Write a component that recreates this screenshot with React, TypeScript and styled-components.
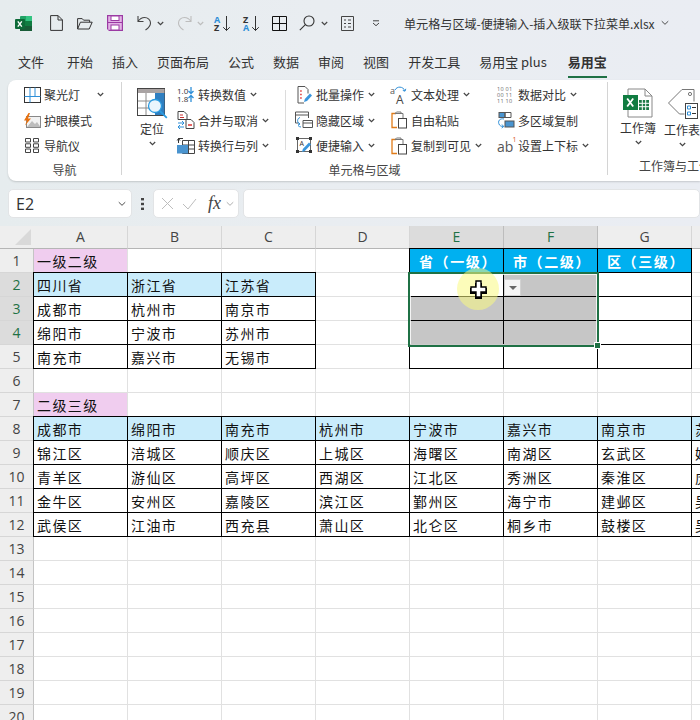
import React from 'react';
import styled, { createGlobalStyle } from 'styled-components';

const CJK = '"Noto Sans CJK SC", "Noto Sans", sans-serif';
const GREEN = '#1f7145';

const GlobalStyle = createGlobalStyle`
  html, body { margin: 0; padding: 0; background: #fff; }
  body { font-family: ${CJK}; color: #262626; }
  svg { overflow: visible; }
`;

const Page = styled.div`
  width: 700px;
  height: 720px;
  overflow: hidden;
  background: linear-gradient(90deg, #e6ecee 0%, #e9edf1 45%, #eaedf3 100%);
`;

/* title bar */
const TitleBar = styled.div`
  height: 46px;
  display: flex;
  align-items: center;
  white-space: nowrap;
`;

const Quick = styled.div<{ $left: number; $w: number }>`
  margin-left: ${({ $left }) => $left}px;
  width: ${({ $w }) => $w}px;
  display: flex;
  justify-content: center;
  flex: none;
`;

const Title = styled.span`
  margin-left: 24px;
  font-size: 12.1px;
  color: #333;
  flex: none;
`;

const Tabs = styled.div`
  height: 32px;
  padding-left: 18px;
  display: flex;
  gap: 19px;
  white-space: nowrap;
`;

const Tab = styled.div<{ $active?: boolean; $extra?: number }>`
  height: 30px;
  line-height: 32px;
  font-size: 13px;
  color: #333;
  font-weight: ${({ $active }) => ($active ? 700 : 400)};
  margin-right: ${({ $extra }) => $extra || 0}px;
  border-bottom: 2px solid ${({ $active }) => ($active ? GREEN : 'transparent')};
`;

/* ribbon */
const Ribbon = styled.div`
  margin: 2px 0 0 8px;
  height: 101px;
  display: flex;
  overflow: hidden;
  background: #fff;
  border-radius: 8px 0 0 8px;
  box-shadow: 0 1px 2px rgba(0, 0, 0, 0.16);
`;

const Group = styled.div<{ $w: number }>`
  flex: none;
  width: ${({ $w }) => $w}px;
  margin-top: 2px;
  height: 93px;
  border-right: 1px solid #d4d4d4;
  display: flex;
  flex-direction: column;
`;

const GroupBody = styled.div<{ $pad: number }>`
  height: 77px;
  padding-left: ${({ $pad }) => $pad}px;
  display: flex;
`;

const GroupLabel = styled.div`
  font-size: 12px;
  line-height: 18px;
  margin-top: 2px;
  text-align: center;
  color: #444;
  white-space: nowrap;
`;

const ItemColumn = styled.div<{ $w?: number }>`
  flex: none;
  width: ${({ $w }) => ($w ? `${$w}px` : 'auto')};
  display: grid;
  grid-auto-rows: 25.5px;
`;

const Item = styled.div`
  display: flex;
  align-items: center;
  font-size: 12px;
  color: #333;
  white-space: nowrap;
`;

const ItemIcon = styled.span`
  width: 18px;
  height: 18px;
  margin-right: 3px;
  display: flex;
  align-items: center;
  justify-content: center;
  flex: none;
`;

const BigButton = styled.div<{ $w: number }>`
  flex: none;
  width: ${({ $w }) => $w}px;
  padding-top: 6px;
  display: flex;
  flex-direction: column;
  align-items: center;
  font-size: 12px;
  line-height: 16px;
  color: #333;
  white-space: nowrap;
`;

const BigLabel = styled.span`
  margin: 2px 0 4px;
`;

const InnerDivider = styled.div<{ $left: number; $right: number }>`
  flex: none;
  width: 1px;
  height: 60px;
  margin: 8px ${({ $right }) => $right}px 0 ${({ $left }) => $left}px;
  background: #dcdcdc;
`;

const ChevronSvg = styled.svg<{ $gap?: number }>`
  margin-left: ${({ $gap }) => $gap ?? 4}px;
  flex: none;
`;

const Chevron: React.FC<{ gap?: number; color?: string; wide?: boolean }> = ({ gap, color = '#444', wide }) => (
  <ChevronSvg $gap={gap} width={wide ? 10 : 7} height={wide ? 6 : 5} viewBox="0 0 7 5">
    <path d="M.8 1l2.700 2.600L6.200 1" fill="none" stroke={color} strokeWidth={wide ? 0.8 : 1.2} />
  </ChevronSvg>
);

/* formula bar */
const FormulaBar = styled.div`
  margin: 8px 0;
  height: 29px;
  padding-left: 8px;
  display: flex;
  align-items: stretch;
`;

const BarBox = styled.div<{ $w?: number }>`
  flex: ${({ $w }) => ($w ? 'none' : 1)};
  width: ${({ $w }) => ($w ? `${$w}px` : 'auto')};
  background: #fff;
  border: 1px solid #e2e4e6;
  border-radius: 5px;
  box-sizing: border-box;
  display: flex;
  align-items: center;
`;

const NameText = styled.span`
  flex: 1;
  margin-left: 7px;
  font: 16px "Open Sans", sans-serif;
  color: #333;
`;

const Dots = styled.div`
  width: 21px;
  flex: none;
  display: flex;
  justify-content: center;
  align-items: center;
`;

const Fx = styled.span`
  margin-left: 9px;
  font: italic 18px "Liberation Serif", serif;
  color: #444;
`;

/* sheet */
const Sheet = styled.div`
  position: relative;
  display: grid;
  grid-template-columns: 34px repeat(8, 94px);
  grid-template-rows: 23px;
  grid-auto-rows: 24px;
  background: #fff;
`;

const Corner = styled.div`
  background: #eeeeee;
  display: flex;
  align-items: flex-end;
  justify-content: flex-end;
  padding: 0 3px 3px 0;
  border-bottom: 1px solid #b5b5b5;
  box-sizing: border-box;
`;

const ColHead = styled.div<{ $on?: boolean }>`
  box-sizing: border-box;
  background: ${({ $on }) => ($on ? '#dcdcdc' : '#eeeeee')};
  color: ${({ $on }) => ($on ? GREEN : '#444')};
  border-right: 1px solid ${({ $on }) => ($on ? '#bdbdbd' : '#d6d6d6')};
  border-bottom: 1px solid ${({ $on }) => ($on ? GREEN : '#b5b5b5')};
  font: 14px/22px "Open Sans", sans-serif;
  text-align: center;
`;

const RowHead = styled.div<{ $on?: boolean }>`
  box-sizing: border-box;
  background: ${({ $on }) => ($on ? '#dcdcdc' : '#eeeeee')};
  color: ${({ $on }) => ($on ? GREEN : '#444')};
  border-right: 1px solid ${({ $on }) => ($on ? GREEN : '#c4c4c4')};
  border-bottom: 1px solid #d6d6d6;
  font: 14px/24px "Open Sans", sans-serif;
  text-align: center;
`;

const Cell = styled.div<{ $bg?: string; $boxed?: boolean; $head?: boolean }>`
  box-sizing: border-box;
  padding-left: 3px;
  overflow: hidden;
  white-space: nowrap;
  background: ${({ $bg }) => $bg || '#fff'};
  border-right: 1px solid ${({ $boxed }) => ($boxed ? '#000' : '#e1e1e1')};
  border-bottom: 1px solid ${({ $boxed }) => ($boxed ? '#000' : '#e1e1e1')};
  box-shadow: ${({ $boxed }) => ($boxed ? '-1px 0 0 #000, 0 -1px 0 #000, -1px -1px 0 #000' : 'none')};
  font-size: 14px;
  line-height: 24px;
  letter-spacing: ${({ $head }) => ($head ? 1.6 : 1.4)}px;
  color: ${({ $head }) => ($head ? '#fff' : '#111')};
  font-weight: ${({ $head }) => ($head ? 700 : 400)};
  text-align: ${({ $head }) => ($head ? 'center' : 'left')};
`;

const Selection = styled.div`
  position: absolute;
  left: 408px;
  top: 46px;
  width: 191px;
  height: 75px;
  box-sizing: border-box;
  border: 2px solid ${GREEN};
  box-shadow: inset 0 0 0 1px rgba(255, 255, 255, 0.8);
  pointer-events: none;
`;

const Handle = styled.div`
  position: absolute;
  right: -4px;
  bottom: -4px;
  width: 5px;
  height: 5px;
  background: ${GREEN};
  border: 1px solid #fff;
`;

const DropButton = styled.div`
  position: absolute;
  left: 504px;
  top: 53px;
  width: 17px;
  height: 17px;
  box-sizing: border-box;
  background: #f4f4f4;
  border: 1px solid #d2d2d2;
  display: flex;
  align-items: center;
  justify-content: center;
`;

const Arrow = styled.div`
  width: 0;
  height: 0;
  border-left: 4px solid transparent;
  border-right: 4px solid transparent;
  border-top: 4px solid #666;
`;

const Spot = styled.div`
  position: absolute;
  left: 457px;
  top: 42px;
  width: 42px;
  height: 42px;
  border-radius: 50%;
  background: rgba(250, 250, 130, 0.55);
  display: flex;
  align-items: center;
  justify-content: center;
`;

/* icons */
const ExcelLogo = () => (
  <svg width="17" height="17" viewBox="0 0 17 17">
    <rect x="5" y="1" width="12" height="15" rx="1" fill="#21a366" />
    <rect x="11" y="1" width="6" height="5" fill="#33c481" />
    <rect x="5" y="6" width="12" height="5" fill="#107c41" />
    <rect x="5" y="11" width="12" height="5" fill="#185c37" />
    <rect x="0" y="4" width="10" height="10" rx="1" fill="#0d6a38" />
    <path d="M2.800 6.300l4 5.400M6.800 6.300l-4 5.400" stroke="#fff" strokeWidth="1.400" />
  </svg>
);

const NewIcon = () => (
  <svg width="13" height="16" viewBox="0 0 13 16" fill="none" stroke="#333">
    <path d="M.6.6h7.500l4.300 4.300v10.500H.6zM8 .6v4.400h4.400" />
  </svg>
);

const OpenIcon = () => (
  <svg width="16" height="13" viewBox="0 0 16 13" fill="none" stroke="#333">
    <path d="M.6 12V1.600h4.600l1.400 1.600h6v2M.6 12h11.600l3-6.800H3.400z" />
  </svg>
);

const SaveIcon = () => (
  <svg width="16" height="16" viewBox="0 0 16 16">
    <path d="M0 0h16v16H2l-2-2z" fill="#9b3aa3" />
    <rect x="1.200" y="1.200" width="13.600" height="13.600" fill="#e3b3e6" />
    <rect x="4" y="1" width="8" height="4.500" fill="#fff" stroke="#9b3aa3" />
    <rect x="4" y="10" width="8" height="5" fill="#fff" stroke="#9b3aa3" />
    <path d="M1 7.500h14" stroke="#9b3aa3" />
  </svg>
);

const UndoIcon: React.FC<{ color: string; flip?: boolean }> = ({ color, flip }) => (
  <svg width="15" height="16" viewBox="0 0 15 16" fill="none" stroke={color} strokeWidth="1.100">
    <path
      transform={flip ? 'matrix(-1 0 0 1 15 0)' : undefined}
      d="M1 1v5.500h5.500M1 6.500C3 3.500 5 2.500 7.500 2.500c3.500 0 6 2.500 6 5.500 0 3-2 5-5 7"
    />
  </svg>
);

const SortIcon: React.FC<{ top: string; bottom: string; topColor: string; bottomColor: string }> = ({
  top,
  bottom,
  topColor,
  bottomColor,
}) => (
  <svg width="17" height="17" viewBox="0 0 17 17">
    <text x="0" y="7.500" fontFamily="Open Sans" fontWeight="700" fontSize="9" fill={topColor}>{top}</text>
    <text x="0" y="16" fontFamily="Open Sans" fontWeight="700" fontSize="9" fill={bottomColor}>{bottom}</text>
    <path d="M12.500 1v14.500M9.200 12.200l3.300 3.300 3.300-3.300" fill="none" stroke="#333" />
  </svg>
);

const BorderIcon = () => (
  <svg width="15" height="15" viewBox="0 0 15 15" fill="none" stroke="#111">
    <path d="M.5.5h14v14H.5zM7.500.5v14M.5 7.500h14" />
  </svg>
);

const SearchIcon = () => (
  <svg width="16" height="16" viewBox="0 0 16 16" fill="none" stroke="#333" strokeWidth="1.100">
    <circle cx="10" cy="6" r="5" />
    <path d="M6.300 9.700L.8 15.200" />
  </svg>
);

const FormIcon = () => (
  <svg width="13" height="15" viewBox="0 0 13 15" fill="none" stroke="#444">
    <path d="M.5.5h12v14H.5z" />
    <path d="M3 4h2M7 4h3M3 7.500h2M7 7.500h3M3 11h2M7 11h3" />
  </svg>
);

const MoreIcon = () => (
  <svg width="8" height="7" viewBox="0 0 8 7" fill="none" stroke="#444">
    <path d="M1 .8h6M1 3l3 2.700L7 3" />
  </svg>
);

const SpotlightIcon = () => (
  <svg width="17" height="16" viewBox="0 0 17 16" fill="none">
    <rect x=".5" y=".5" width="16" height="15" stroke="#333" />
    <path d="M6 .5v15M.5 9.500h16M11 .5v9" stroke="#2e8fd8" />
  </svg>
);

const EyeIcon = () => (
  <svg width="18" height="15" viewBox="0 0 18 15">
    <rect x="3.500" y="3.500" width="14" height="11" fill="#f2f2f2" stroke="#888" />
    <path d="M4 14l5-6 3 3 2-2 3.500 5z" fill="#bdbdbd" />
    <path d="M5.500 0L1 7.500h3l-2 5 6-7H5l2-5.500z" fill="#e8710f" />
  </svg>
);

const NavIcon = () => (
  <svg width="14" height="15" viewBox="0 0 14 15" fill="none" stroke="#444">
    <path d="M.5.500h5v3.500h-5zM8.500.500h5v3.500h-5zM.5 5.800h5v3.500h-5zM8.500 5.800h5v3.500h-5zM.5 11h5v3.500h-5zM8.500 11h5v3.500h-5z" />
  </svg>
);

const LocateIcon = () => (
  <svg width="31" height="31" viewBox="0 0 31 31">
    <rect x=".5" y=".5" width="27" height="27" fill="#fff" stroke="#444" />
    <rect x="1" y="1" width="26.500" height="4" fill="#a9a3a3" />
    <rect x="18" y="5" width="9.500" height="22" fill="#2f7fc1" />
    <path d="M1 13h17M1 20h17M9 5v22" stroke="#8a8a8a" fill="none" />
    <circle cx="18" cy="18" r="6.500" fill="#eaf5fd" stroke="#2b9be0" strokeWidth="1.300" />
    <path d="M22.800 22.800l7 7" stroke="#2b9be0" strokeWidth="1.800" />
  </svg>
);

const ConvertValueIcon = () => (
  <svg width="18" height="17" viewBox="0 0 18 17">
    <text x="0" y="7.500" fontFamily="Open Sans" fontSize="8" fill="#333">1.0</text>
    <text x="0" y="16" fontFamily="Open Sans" fontSize="8" fill="#333">1.8</text>
    <path d="M14 1v6M11.500 5l2.500 2.500L16.500 5M14 16v-6M11.500 12l2.500-2.500 2.500 2.500" fill="none" stroke="#2e8fd8" strokeWidth="1.300" />
  </svg>
);

const MergeIcon = () => (
  <svg width="18" height="18" viewBox="0 0 18 18" fill="none">
    <path d="M1 .5h6l3 3v5H1z" stroke="#444" fill="#fff" />
    <path d="M3 4h3M3 6.500h4" stroke="#c33" />
    <path d="M9 8.500h5l3 3v6H9z" stroke="#444" fill="#fff" />
    <path d="M11 14h4" stroke="#d33" strokeWidth="1.300" />
    <path d="M1 12h6M5 10l2 2-2 2M7 16H1M3 14l-2 2 2 2" stroke="#2e8fd8" />
  </svg>
);

const SwapIcon = () => (
  <svg width="18" height="17" viewBox="0 0 18 17" fill="none">
    <path d="M5.500 3.500h12v13h-12z" stroke="#444" />
    <path d="M5.500 8h12M5.500 12h12M11.500 3.500v13" stroke="#444" />
    <rect x="0" y="8" width="11" height="8.500" fill="#4a94cf" />
    <path d="M1.500 6V1.500H6M.2 3.500l1.300-2 1.500 2" stroke="#333" />
  </svg>
);

const BatchIcon = () => (
  <svg width="17" height="18" viewBox="0 0 17 18" fill="none">
    <path d="M2 .5h7l3 3v4M2 .5v16.500h6" stroke="#555" />
    <path d="M4.200 5h3M4.200 8.500h3M4.200 12h2" stroke="#d33" strokeWidth="1.400" strokeDasharray="1.500 1.500" />
    <path d="M8 16l.8-3L14 7.500l2 2L11 15z" fill="#3a96dd" />
  </svg>
);

const HideIcon = () => (
  <svg width="18" height="18" viewBox="0 0 18 18" fill="none">
    <path d="M.5 1h13v6M.5 1v11h3M.5 4h13" stroke="#555" />
    <path d="M8 9.500h9.500v7H8zM8 12h9.500" stroke="#555" />
    <path d="M5 6.500C1.800 7.500 1.800 12 5 13M3.200 11.500L5 13l-2 1M6 16c-1 0-2-.5-3-1.500" stroke="#2e8fd8" />
  </svg>
);

const QuickInputIcon = () => (
  <svg width="17" height="17" viewBox="0 0 17 17" fill="none">
    <path d="M1.500 1.500h13v13h-13z" stroke="#666" />
    <rect y="0" width="3" height="3" fill="#333" />
    <rect x="13" y="0" width="3" height="3" fill="#333" />
    <rect y="13" width="3" height="3" fill="#333" />
    <rect x="13" y="13" width="3" height="3" fill="#333" />
    <text x="3.500" y="9" fontFamily="Open Sans" fontSize="7" fill="#333">A</text>
    <path d="M6 15l.8-3L13 5.500l2 2L8.800 14z" fill="#3a96dd" />
  </svg>
);

const TextIcon = () => (
  <svg width="19" height="18" viewBox="0 0 19 18" fill="none">
    <text x="0" y="8" fontFamily="Open Sans" fontSize="9" fill="#555">a</text>
    <text x="6" y="17.500" fontFamily="Open Sans" fontSize="12" fill="#444">A</text>
    <path d="M5 4C7 0 13 0 15 5M12.800 4.400l2.200.8.800-2.400" stroke="#2e8fd8" />
  </svg>
);

const PasteIcon: React.FC = () => (
  <svg width="17" height="18" viewBox="0 0 17 18" fill="none">
    <path d="M5 2.500H1v14h5" stroke="#e07b18" strokeWidth="1.300" />
    <path d="M4 2.500h6V1H5.500zM10 2.500h2V7" stroke="#777" />
    <rect x="7.500" y="7.500" width="8" height="9.500" stroke="#444" />
  </svg>
);

const CompareIcon = () => (
  <svg width="19" height="17" viewBox="0 0 19 17">
    <text x="0" y="5" fontFamily="Open Sans" fontSize="5.500" letterSpacing=".3" fill="#666">10 01</text>
    <text x="0" y="11" fontFamily="Open Sans" fontSize="5.500" letterSpacing=".3" fill="#666">00 11</text>
    <text x="0" y="17" fontFamily="Open Sans" fontSize="5.500" letterSpacing=".3" fill="#666">11 10</text>
  </svg>
);

const MultiCopyIcon = () => (
  <svg width="18" height="17" viewBox="0 0 18 17" fill="none">
    <rect x="2" y=".5" width="6" height="5" fill="#4a94cf" stroke="#555" />
    <path d="M8 .5h6v5H8z" stroke="#555" />
    <rect x="8" y="9" width="9" height="6" fill="#4a94cf" stroke="#555" />
    <path d="M7 7C3 6 0 9 2.500 13c1 1 2 1.500 4 1.500M5 12.500l1.700 2-2 1.500" stroke="#2e8fd8" />
  </svg>
);

const SuperIcon = () => (
  <svg width="19" height="17" viewBox="0 0 19 17">
    <text x="0" y="15" fontFamily="Open Sans" fontSize="14" fill="#555">ab</text>
    <text x="15.500" y="5" fontFamily="Open Sans" fontSize="7" fill="#d9541e">1</text>
  </svg>
);

const WorkbookIcon = () => (
  <svg width="30" height="30" viewBox="0 0 30 30">
    <path d="M5 1h17l7 7v21H5z" fill="#fff" stroke="#888" />
    <path d="M22 1v7h7" fill="none" stroke="#888" />
    <rect x="16" y="12" width="10" height="10" fill="#1d7a47" />
    <path d="M19.300 12v10M22.700 12v10M16 15.300h10M16 18.700h10" stroke="#fff" />
    <rect x="0" y="7" width="15" height="15" fill="#107c41" />
    <path d="M4.200 10.500l6 8M10.200 10.500l-6 8" stroke="#fff" strokeWidth="1.800" />
  </svg>
);

const WorksheetIcon = () => (
  <svg width="31" height="32" viewBox="0 0 31 32" fill="none">
    <path d="M1.500 15L15 1.500h12v12M1.500 15l11 11h5" stroke="#777" />
    <circle cx="23" cy="6" r="1.600" stroke="#777" />
    <rect x="18.500" y="15.500" width="12" height="15" fill="#fff" stroke="#444" />
    <path d="M20.500 18h3v3h-3zM20.500 24h3v3h-3z" stroke="#2e8fd8" />
    <path d="M25 19.500h4M25 25.500h4" stroke="#333" />
  </svg>
);

const PlusCursor = () => (
  <svg width="19" height="19" viewBox="0 0 19 19">
    <path d="M6 3h7v5h5v6h-5v5H6v-5H1V8h5z" fill="#000" />
    <path d="M7 1h5v6h5v5h-5v5H7v-5H2V7h5z" fill="#fff" stroke="#000" strokeWidth="1.400" />
  </svg>
);

const CornerMark = () => (
  <svg width="16" height="16" viewBox="0 0 16 16">
    <path d="M16 0v16H0z" fill="#d9d9d9" />
  </svg>
);

const XMark = () => (
  <svg width="13" height="13" viewBox="0 0 13 13" stroke="#bdbdbd" fill="none">
    <path d="M1 1l11 11M12 1L1 12" />
  </svg>
);

const CheckMark = () => (
  <svg width="15" height="12" viewBox="0 0 15 12" stroke="#bdbdbd" fill="none">
    <path d="M1 6l5 5 8-10" />
  </svg>
);

const DotsMark = () => (
  <svg width="3" height="12" viewBox="0 0 3 12" fill="#444">
    <rect width="3" height="2.400" />
    <rect y="4.800" width="3" height="2.400" />
    <rect y="9.600" width="3" height="2.400" />
  </svg>
);

const BarGap = styled.span<{ $w: number }>`
  width: ${({ $w }) => $w}px;
  flex: none;
  display: flex;
  justify-content: center;
`;

const Spacer = styled.div<{ $w: number }>`
  flex: none;
  width: ${({ $w }) => $w}px;
`;

/* data */
type CellDef = { text?: string; bg?: string; boxed?: boolean; head?: boolean };

const PINK = '#f0cdef';
const SKY = '#c9ecfb';
const BLUE = '#00b0f0';
const GREY = '#c6c6c6';

const table1 = [
  ['四川省', '浙江省', '江苏省'],
  ['成都市', '杭州市', '南京市'],
  ['绵阳市', '宁波市', '苏州市'],
  ['南充市', '嘉兴市', '无锡市'],
];

const table2 = [
  ['成都市', '绵阳市', '南充市', '杭州市', '宁波市', '嘉兴市', '南京市', '苏州市'],
  ['锦江区', '涪城区', '顺庆区', '上城区', '海曙区', '南湖区', '玄武区', '姑苏区'],
  ['青羊区', '游仙区', '高坪区', '西湖区', '江北区', '秀洲区', '秦淮区', '虎丘区'],
  ['金牛区', '安州区', '嘉陵区', '滨江区', '鄞州区', '海宁市', '建邺区', '吴中区'],
  ['武侯区', '江油市', '西充县', '萧山区', '北仑区', '桐乡市', '鼓楼区', '吴江区'],
];

function cellAt(row: number, col: number): CellDef {
  if (row === 1 && col === 0) return { text: '一级二级', bg: PINK };
  if (row === 7 && col === 0) return { text: '二级三级', bg: PINK };
  if (row >= 2 && row <= 5 && col < 3) {
    return { text: table1[row - 2][col], boxed: true, bg: row === 2 ? SKY : undefined };
  }
  if (row === 1 && col >= 4 && col <= 6) {
    return { text: ['省（一级）', '市（二级）', '区（三级）'][col - 4], bg: BLUE, boxed: true, head: true };
  }
  if (row >= 2 && row <= 5 && col >= 4 && col <= 6) {
    const selected = row <= 4 && col <= 5 && !(row === 2 && col === 4);
    return { boxed: true, bg: selected ? GREY : undefined };
  }
  if (row >= 8 && row <= 12) {
    return { text: table2[row - 8][col], boxed: true, bg: row === 8 ? SKY : undefined };
  }
  return {};
}

const columns = ['A', 'B', 'C', 'D', 'E', 'F', 'G', 'H'];
const rows = Array.from({ length: 20 }, (_, i) => i + 1);

const App: React.FC = () => (
  <Page>
    <GlobalStyle />
    <TitleBar>
      <Quick $left={15} $w={17}><ExcelLogo /></Quick>
      <Quick $left={18} $w={13}><NewIcon /></Quick>
      <Quick $left={14} $w={16}><OpenIcon /></Quick>
      <Quick $left={14} $w={16}><SaveIcon /></Quick>
      <Quick $left={14} $w={15}><UndoIcon color="#444" /></Quick>
      <Quick $left={5} $w={7}><Chevron gap={0} /></Quick>
      <Quick $left={13} $w={15}><UndoIcon color="#bdbdbd" flip /></Quick>
      <Quick $left={5} $w={7}><Chevron gap={0} color="#bdbdbd" /></Quick>
      <Quick $left={10} $w={17}><SortIcon top="A" bottom="Z" topColor="#2e8fd8" bottomColor="#333" /></Quick>
      <Quick $left={12} $w={17}><SortIcon top="Z" bottom="A" topColor="#333" bottomColor="#2e8fd8" /></Quick>
      <Quick $left={12} $w={15}><BorderIcon /></Quick>
      <Quick $left={12} $w={16}><SearchIcon /></Quick>
      <Quick $left={6} $w={7}><Chevron gap={0} /></Quick>
      <Quick $left={13} $w={13}><FormIcon /></Quick>
      <Quick $left={18} $w={8}><MoreIcon /></Quick>
      <Title>单元格与区域-便捷输入-插入级联下拉菜单.xlsx</Title>
      <Chevron gap={5} wide />
    </TitleBar>

    <Tabs>
      <Tab $extra={4}>文件</Tab>
      <Tab>开始</Tab>
      <Tab>插入</Tab>
      <Tab>页面布局</Tab>
      <Tab>公式</Tab>
      <Tab>数据</Tab>
      <Tab>审阅</Tab>
      <Tab>视图</Tab>
      <Tab>开发工具</Tab>
      <Tab $extra={2}>易用宝 plus</Tab>
      <Tab $active>易用宝</Tab>
    </Tabs>

    <Ribbon>
      <Group $w={113}>
        <GroupBody $pad={15}>
          <ItemColumn>
            <Item><ItemIcon><SpotlightIcon /></ItemIcon>聚光灯<Chevron gap={17} /></Item>
            <Item><ItemIcon><EyeIcon /></ItemIcon>护眼模式</Item>
            <Item><ItemIcon><NavIcon /></ItemIcon>导航仪</Item>
          </ItemColumn>
        </GroupBody>
        <GroupLabel>导航</GroupLabel>
      </Group>

      <Group $w={485}>
        <GroupBody $pad={15}>
          <BigButton $w={30}>
            <LocateIcon />
            <BigLabel>定位</BigLabel>
            <Chevron gap={0} />
          </BigButton>
          <Spacer $w={10} />
          <ItemColumn $w={98}>
            <Item><ItemIcon><ConvertValueIcon /></ItemIcon>转换数值<Chevron /></Item>
            <Item><ItemIcon><MergeIcon /></ItemIcon>合并与取消<Chevron /></Item>
            <Item><ItemIcon><SwapIcon /></ItemIcon>转换行与列<Chevron /></Item>
          </ItemColumn>
          <InnerDivider $left={10} $right={9} />
          <ItemColumn $w={95}>
            <Item><ItemIcon><BatchIcon /></ItemIcon>批量操作<Chevron /></Item>
            <Item><ItemIcon><HideIcon /></ItemIcon>隐藏区域<Chevron /></Item>
            <Item><ItemIcon><QuickInputIcon /></ItemIcon>便捷输入<Chevron /></Item>
          </ItemColumn>
          <ItemColumn $w={107}>
            <Item><ItemIcon><TextIcon /></ItemIcon>文本处理<Chevron /></Item>
            <Item><ItemIcon><PasteIcon /></ItemIcon>自由粘贴</Item>
            <Item><ItemIcon><PasteIcon /></ItemIcon>复制到可见<Chevron /></Item>
          </ItemColumn>
          <ItemColumn>
            <Item><ItemIcon><CompareIcon /></ItemIcon>数据对比<Chevron /></Item>
            <Item><ItemIcon><MultiCopyIcon /></ItemIcon>多区域复制</Item>
            <Item><ItemIcon><SuperIcon /></ItemIcon>设置上下标<Chevron /></Item>
          </ItemColumn>
        </GroupBody>
        <GroupLabel>单元格与区域</GroupLabel>
      </Group>

      <Group $w={146}>
        <GroupBody $pad={12}>
          <BigButton $w={36}>
            <WorkbookIcon />
            <BigLabel>工作簿</BigLabel>
            <Chevron gap={0} />
          </BigButton>
          <Spacer $w={8} />
          <BigButton $w={36}>
            <WorksheetIcon />
            <BigLabel>工作表</BigLabel>
            <Chevron gap={0} />
          </BigButton>
        </GroupBody>
        <GroupLabel>工作簿与工作表</GroupLabel>
      </Group>
    </Ribbon>

    <FormulaBar>
      <BarBox $w={124}>
        <NameText>E2</NameText>
        <Chevron gap={0} wide />
        <Spacer $w={4} />
      </BarBox>
      <Dots><DotsMark /></Dots>
      <BarBox $w={86}>
        <BarGap $w={26}><XMark /></BarGap>
        <BarGap $w={19}><CheckMark /></BarGap>
        <Fx>fx</Fx>
        <Chevron gap={4} color="#aaa" wide />
      </BarBox>
      <Spacer $w={4} />
      <BarBox />
    </FormulaBar>

    <Sheet>
      <Corner><CornerMark /></Corner>
      {columns.map((c) => (
        <ColHead key={c} $on={c === 'E' || c === 'F'}>{c}</ColHead>
      ))}
      {rows.map((r) => (
        <React.Fragment key={r}>
          <RowHead $on={r >= 2 && r <= 4}>{r}</RowHead>
          {columns.map((c, i) => {
            const def = cellAt(r, i);
            return (
              <Cell key={c} $bg={def.bg} $boxed={def.boxed} $head={def.head}>
                {def.text}
              </Cell>
            );
          })}
        </React.Fragment>
      ))}
      <Selection><Handle /></Selection>
      <DropButton><Arrow /></DropButton>
      <Spot><PlusCursor /></Spot>
    </Sheet>
  </Page>
);

export default App;
